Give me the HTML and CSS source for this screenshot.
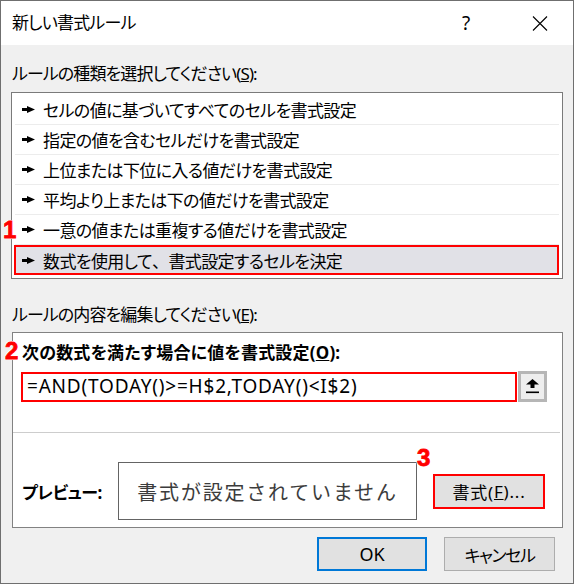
FILE: index.html
```html
<!DOCTYPE html>
<html lang="ja">
<head>
<meta charset="utf-8">
<title>新しい書式ルール</title>
<link rel="stylesheet" href="styles.css">
</head>
<body>
<div class="dialog">
  <div class="titlebar">
    <span class="title">新しい書式ルール</span>
    <span class="help">?</span>
    <span class="close"><svg width="16" height="15" viewBox="0 0 16 15"><path d="M1 0.5 L15 14.5 M15 0.5 L1 14.5" stroke="#000" stroke-width="1.1" fill="none"/></svg></span>
  </div>
  <div class="content">
    <div class="label first">ルールの種類を選択してください(<u>S</u>):</div>
    <div class="listbox">
      <div class="item"><svg class="arrow" width="13" height="7" viewBox="0 0 13 7"><polygon points="0,2 5,2 5,0 13,3.5 5,7 5,5 0,5" fill="#000"/></svg><span>セルの値に基づいてすべてのセルを書式設定</span></div>
      <div class="item"><svg class="arrow" width="13" height="7" viewBox="0 0 13 7"><polygon points="0,2 5,2 5,0 13,3.5 5,7 5,5 0,5" fill="#000"/></svg><span>指定の値を含むセルだけを書式設定</span></div>
      <div class="item"><svg class="arrow" width="13" height="7" viewBox="0 0 13 7"><polygon points="0,2 5,2 5,0 13,3.5 5,7 5,5 0,5" fill="#000"/></svg><span>上位または下位に入る値だけを書式設定</span></div>
      <div class="item"><svg class="arrow" width="13" height="7" viewBox="0 0 13 7"><polygon points="0,2 5,2 5,0 13,3.5 5,7 5,5 0,5" fill="#000"/></svg><span>平均より上または下の値だけを書式設定</span></div>
      <div class="item"><svg class="arrow" width="13" height="7" viewBox="0 0 13 7"><polygon points="0,2 5,2 5,0 13,3.5 5,7 5,5 0,5" fill="#000"/></svg><span>一意の値または重複する値だけを書式設定</span></div>
      <div class="item selected"><svg class="arrow" width="13" height="7" viewBox="0 0 13 7"><polygon points="0,2 5,2 5,0 13,3.5 5,7 5,5 0,5" fill="#000"/></svg><span>数式を使用して<span class="fullwidth">、</span>書式設定するセルを決定</span></div>
    </div>
    <div class="label second">ルールの内容を編集してください(<u>E</u>):</div>
    <div class="panel">
      <div class="bold-label">次の数式を満たす場合に値を書式設定(<u>O</u>):</div>
      <div class="formula-row">
        <div class="formula">=AND(TODAY()&gt;=H$2,TODAY()&lt;I$2)</div>
        <div class="refbtn"><svg width="13" height="15" viewBox="0 0 13 15"><polygon points="6.5,0 13,5.5 8.5,5.5 8.5,9 4.5,9 4.5,5.5 0,5.5" fill="#000"/><rect x="0" y="12.5" width="13" height="1.6" fill="#000"/></svg></div>
      </div>
      <div class="sep"></div>
      <div class="preview-row">
        <span class="preview-label">プレビュー:</span>
        <div class="preview-box">書式が設定されていません</div>
        <div class="btn fmt">書式(<u>F</u>)...</div>
      </div>
    </div>
    <div class="actions">
      <div class="btn ok">OK</div>
      <div class="btn cancel">キャンセル</div>
    </div>
  </div>
  <span class="num n1">1</span>
  <span class="num n2">2</span>
  <span class="num n3">3</span>
</div>
</body>
</html>
```

FILE: styles.css
```css
body {
  margin: 0;
  background: #ffffff;
  font-family: "Noto Sans", "Noto Sans CJK JP", sans-serif;
  font-feature-settings: "palt";
  color: #000;
}

.dialog {
  position: relative;
  width: 574px;
  height: 584px;
  box-sizing: border-box;
  border: 1px solid #6f6f6f;
  background: #f0f0f0;
  display: flex;
  flex-direction: column;
}

.titlebar {
  height: 44px;
  flex: none;
  background: #ffffff;
  display: flex;
  align-items: center;
  padding-left: 11px;
}

.title {
  flex: 1;
  font-size: 17px;
  letter-spacing: -0.8px;
  line-height: 20px;
}

.help {
  width: 30px;
  text-align: center;
  font-size: 19px;
  line-height: 20px;
  margin-right: 51px;
  font-feature-settings: normal;
}

.close {
  width: 16px;
  height: 15px;
  margin-right: 25px;
  display: flex;
}

.content {
  padding: 0 10px;
  display: flex;
  flex-direction: column;
}

.label {
  font-size: 17px;
  letter-spacing: -0.9px;
  line-height: 20px;
  height: 20px;
  padding-left: 1px;
  white-space: nowrap;
}

.label.first { margin-top: 19px; }
.label.second { margin-top: 26px; }

.listbox {
  margin-top: 8px;
  height: 187px;
  box-sizing: border-box;
  border: 1px solid #7a7a7a;
  background: #ffffff;
  padding: 2px 3px;
}

.item {
  height: 30px;
  box-sizing: border-box;
  border-bottom: 1px solid #ececec;
  display: flex;
  align-items: center;
  padding-left: 7px;
  font-size: 17px;
  letter-spacing: -0.6px;
  white-space: nowrap;
}

.item .arrow {
  flex: none;
  margin-right: 8px;
}

.fullwidth {
  font-feature-settings: normal;
}

.item.selected {
  border: 2px solid #ff0000;
  background: #e1e1e7;
  padding-left: 6px;
  margin-left: -1px;
}

.panel {
  margin-top: 7px;
  margin-left: 1px;
  box-sizing: border-box;
  border: 1px solid #828282;
  background: #ffffff;
  padding: 10px 0 7px 8px;
  display: flex;
  flex-direction: column;
}

.bold-label {
  font-size: 17px;
  font-weight: bold;
  letter-spacing: 0.2px;
  line-height: 20px;
  height: 20px;
  padding-left: 1px;
  white-space: nowrap;
}

.formula-row {
  margin-top: 8px;
  height: 31px;
  display: flex;
}

.formula {
  width: 496px;
  height: 30px;
  margin-top: 1px;
  box-sizing: border-box;
  border: 2px solid #ff0000;
  padding-left: 4px;
  font-family: "Noto Sans", sans-serif;
  font-size: 19px;
  letter-spacing: 0.8px;
  line-height: 25px;
  white-space: nowrap;
}

.refbtn {
  width: 29px;
  height: 31px;
  margin-left: 1px;
  box-sizing: border-box;
  border: 3px solid #b6b6b6;
  background: #eeeeee;
  display: flex;
  align-items: center;
  justify-content: center;
}

.sep {
  margin-top: 30px;
  margin-left: -8px;
  width: 547px;
  height: 1px;
  background: #cdcdcd;
}

.preview-row {
  margin-top: 29px;
  height: 58px;
  display: flex;
  align-items: center;
}

.preview-label {
  width: 96px;
  padding-left: 1px;
  font-size: 17px;
  letter-spacing: -0.5px;
  font-weight: bold;
  white-space: nowrap;
}

.preview-box {
  width: 299px;
  height: 58px;
  box-sizing: border-box;
  border: 1px solid #646464;
  display: flex;
  align-items: center;
  justify-content: center;
  font-family: "Noto Sans CJK JP", sans-serif;
  font-feature-settings: normal;
  font-size: 20px;
  letter-spacing: 1.8px;
  color: #3c3c3c;
  white-space: nowrap;
}

.btn {
  box-sizing: border-box;
  background: #e1e1e1;
  display: flex;
  align-items: center;
  justify-content: center;
  font-size: 17px;
  white-space: nowrap;
}

.fmt {
  margin-left: 16px;
  width: 112px;
  height: 35px;
  border: 2px solid #ff0000;
  letter-spacing: 0.8px;
}

.actions {
  margin-top: 9px;
  display: flex;
  justify-content: flex-end;
  gap: 17px;
  padding-right: 8px;
}

.ok {
  width: 110px;
  height: 34px;
  border: 2px solid #0078d7;
  font-size: 18px;
}

.cancel {
  width: 111px;
  height: 34px;
  border: 1px solid #adadad;
  letter-spacing: -1.4px;
}

.num {
  position: absolute;
  font-family: "Liberation Sans", sans-serif;
  font-weight: bold;
  font-size: 24px;
  line-height: 24px;
  color: #ff0000;
  -webkit-text-stroke: 0.8px #ff0000;
  text-shadow: 1px 1px 0 #fff, -1px -1px 0 #fff, 1px -1px 0 #fff, -1px 1px 0 #fff, 0 0 2px #fff;
}

.n1 { left: 2px; top: 217px; }
.n2 { left: 4px; top: 338px; }
.n3 { left: 416px; top: 445px; }
```
